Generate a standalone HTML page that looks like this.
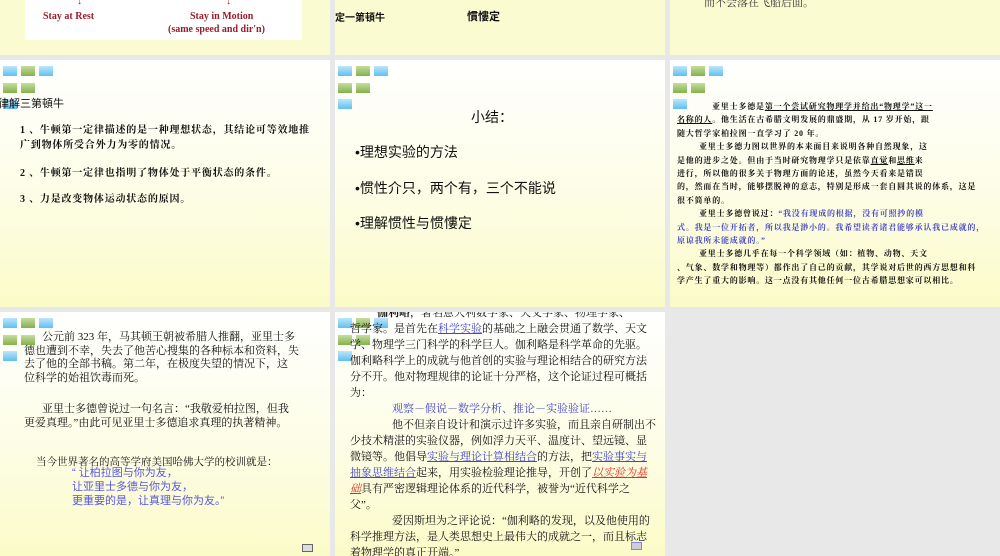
<!DOCTYPE html>
<html><head><meta charset="utf-8"><style>
*{margin:0;padding:0;box-sizing:border-box}
body{width:1000px;height:556px;background:#e8e8e8;position:relative;overflow:hidden;font-family:"Liberation Serif","Noto Serif CJK SC",serif;color:#111}
.s{position:absolute;background:linear-gradient(#ffffff 0%,#fdfde6 55%,#fbfbc8 100%);overflow:hidden}
.t{position:absolute;white-space:nowrap}
.sq{position:absolute;width:14px;height:10px}
.b{background:linear-gradient(#bfe6fb,#5ec0f0)}
.g{background:linear-gradient(#c6dca0,#84b24c)}
.sans{font-family:"Liberation Sans","Noto Sans CJK SC",sans-serif}
.u{text-decoration:underline}
.bl{color:#4646c8}
</style></head><body>

<!-- row 1 -->
<div class="s" style="left:0;top:0;width:330px;height:55px;background:#fbfbd2">
  <div style="position:absolute;left:25px;top:0;width:277px;height:40px;background:#fff"></div>
  <div class="t" style="left:77px;top:-4px;color:#a02020;font-size:10px">↓</div>
  <div class="t" style="left:226px;top:-4px;color:#a02020;font-size:10px">↓</div>
  <div class="t" style="left:43px;top:11px;color:#9a1e2a;font-size:10px;font-weight:bold">Stay at Rest</div>
  <div class="t" style="left:190px;top:11px;color:#9a1e2a;font-size:10px;font-weight:bold">Stay in Motion</div>
  <div class="t" style="left:168px;top:24px;color:#9a1e2a;font-size:10px;font-weight:bold">(same speed and dir'n)</div>
</div>
<div class="s" style="left:335px;top:0;width:330px;height:55px;background:#fbfbd2">
  <div class="t sans" style="left:0;top:9px;font-size:10px;font-weight:bold">定一第頓牛</div>
  <div class="t sans" style="left:132px;top:8px;font-size:11px;font-weight:bold">慣慺定</div>
</div>
<div class="s" style="left:670px;top:0;width:330px;height:55px;background:#fbfbd2">
  <div class="t" style="left:34px;top:-6px;font-size:11px;color:#333">而不会落在飞船后面。</div>
</div>

<!-- row 2 -->
<div class="s" style="left:0;top:60px;width:330px;height:247px">
  <div class="sq b" style="left:3px;top:6px"></div><div class="sq g" style="left:21px;top:6px"></div><div class="sq b" style="left:39px;top:6px"></div>
  <div class="sq g" style="left:3px;top:23px"></div><div class="sq g" style="left:21px;top:23px"></div>
  <div class="sq b" style="left:3px;top:39px"></div>
  <div class="t sans" style="left:-2px;top:35px;font-size:11px">律解三第頓牛</div>
  <div class="t" style="left:20px;top:63px;font-size:10px;letter-spacing:0.8px;line-height:15px;font-weight:bold">1 、牛顿第一定律描述的是一种理想状态，其结论可等效地推<br>广到物体所受合外力为零的情况。</div>
  <div class="t" style="left:20px;top:104px;font-size:10px;letter-spacing:0.8px;font-weight:bold">2 、牛顿第一定律也指明了物体处于平衡状态的条件。</div>
  <div class="t" style="left:20px;top:130px;font-size:10px;letter-spacing:0.8px;font-weight:bold">3 、力是改变物体运动状态的原因。</div>
</div>
<div class="s" style="left:335px;top:60px;width:330px;height:247px">
  <div class="sq b" style="left:3px;top:6px"></div><div class="sq g" style="left:21px;top:6px"></div><div class="sq b" style="left:39px;top:6px"></div>
  <div class="sq g" style="left:3px;top:23px"></div><div class="sq g" style="left:21px;top:23px"></div>
  <div class="sq b" style="left:3px;top:39px"></div>
  <div class="t sans" style="left:136px;top:47px;font-size:14px">小结：</div>
  <div class="t sans" style="left:20px;top:82px;font-size:14px">•理想实验的方法</div>
  <div class="t sans" style="left:20px;top:118px;font-size:14px">•惯性介只，两个有，三个不能说</div>
  <div class="t sans" style="left:20px;top:153px;font-size:14px">•理解惯性与惯慺定</div>
</div>
<div class="s" style="left:670px;top:60px;width:330px;height:247px">
  <div class="sq b" style="left:3px;top:6px"></div><div class="sq g" style="left:21px;top:6px"></div><div class="sq b" style="left:39px;top:6px"></div>
  <div class="sq g" style="left:3px;top:23px"></div><div class="sq g" style="left:21px;top:23px"></div>
  <div class="sq b" style="left:3px;top:39px"></div>
  <div class="t" style="left:7px;top:40px;font-size:8px;letter-spacing:0.8px;line-height:13.4px;font-weight:bold">
    <span style="padding-left:35px"></span>亚里士多德是<span class="u">第一个尝试研究物理学并给出“物理学”这一</span><br>
    <span class="u">名称的人</span>。他生活在古希腊文明发展的鼎盛期，从 17 岁开始，跟<br>
    随大哲学家柏拉图一直学习了 20 年。<br>
    <span style="padding-left:22px"></span>亚里士多德力图以世界的本来面目来说明各种自然现象，这<br>
    是他的进步之处。但由于当时研究物理学只是依靠<span class="u">直觉</span>和<span class="u">思维</span>来<br>
    进行，所以他的很多关于物理方面的论述，虽然今天看来是错误<br>
    的，然而在当时，能够摆脱神的意志，特别是形成一套自圆其说的体系，这是<br>
    很不简单的。<br>
    <span style="padding-left:22px"></span>亚里士多德曾说过：<span class="bl">“我没有现成的根据，没有可照抄的模</span><br>
    <span class="bl">式。我是一位开拓者，所以我是渺小的。我希望读者诸君能够承认我已成就的，</span><br>
    <span class="bl">原谅我所未能成就的。”</span><br>
    <span style="padding-left:22px"></span>亚里士多德几乎在每一个科学领域（如：植物、动物、天文<br>
    、气象、数学和物理等）都作出了自己的贡献，其学说对后世的西方思想和科<br>
    学产生了重大的影响。这一点没有其他任何一位古希腊思想家可以相比。
  </div>
</div>

<!-- row 3 -->
<div class="s" style="left:0;top:312px;width:330px;height:244px">
  <div class="sq b" style="left:3px;top:6px"></div><div class="sq g" style="left:21px;top:6px"></div><div class="sq b" style="left:39px;top:6px"></div>
  <div class="sq g" style="left:3px;top:23px"></div><div class="sq g" style="left:21px;top:23px"></div>
  <div class="sq b" style="left:3px;top:39px"></div>
  <div class="t" style="left:24px;top:19px;font-size:11px;line-height:13.6px">
    <span style="padding-left:18px"></span>公元前 323 年，马其顿王朝被希腊人推翻，亚里士多<br>
    德也遭到不幸，失去了他苦心搜集的各种标本和资料，失<br>
    去了他的全部书稿。第二年，在极度失望的情况下，这<br>
    位科学的始祖饮毒而死。</div>
  <div class="t" style="left:24px;top:90px;font-size:11px;line-height:14px">
    <span style="padding-left:18px"></span>亚里士多德曾说过一句名言：“我敬爱柏拉图，但我<br>更爱真理。”由此可见亚里士多德追求真理的执著精神。</div>
  <div class="t" style="left:36px;top:142px;font-size:10.5px">当今世界著名的高等学府美国哈佛大学的校训就是：</div>
  <div class="t sans" style="left:72px;top:154px;font-size:11px;line-height:14px;color:#5656e0">“ 让柏拉图与你为友，<br>让亚里士多德与你为友，<br>更重要的是，让真理与你为友。”</div>
  <div style="position:absolute;left:302px;top:232px;width:11px;height:8px;border:1px solid #666;background:#ddd"></div>
</div>
<div class="s" style="left:335px;top:312px;width:330px;height:244px">
  <div class="sq b" style="left:3px;top:6px"></div><div class="sq g" style="left:21px;top:6px"></div><div class="sq b" style="left:39px;top:6px"></div>
  <div class="sq g" style="left:3px;top:23px"></div><div class="sq g" style="left:21px;top:23px"></div>
  <div class="sq b" style="left:3px;top:39px"></div>
  <div class="t" style="left:15px;top:-7px;font-size:11px;line-height:16px">
    <span style="padding-left:27px"></span><b>伽利略</b>，著名意大利数学家、天文学家、物理学家、<br>
    哲学家。是首先在<span class="u bl">科学实验</span>的基础之上融会贯通了数学、天文<br>
    学、物理学三门科学的科学巨人。伽利略是科学革命的先驱。<br>
    伽利略科学上的成就与他首创的实验与理论相结合的研究方法<br>
    分不开。他对物理规律的论证十分严格，这个论证过程可概括<br>
    为：<br>
    <span style="padding-left:42px"></span><span class="bl">观察－假说－数学分析、推论－实验验证……</span><br>
    <span style="padding-left:42px"></span>他不但亲自设计和演示过许多实验，而且亲自研制出不<br>
    少技术精湛的实验仪器，例如浮力天平、温度计、望远镜、显<br>
    微镜等。他倡导<span class="u bl">实验与理论计算相结合</span>的方法，把<span class="u bl">实验事实与</span><br>
    <span class="u bl">抽象思维结合</span>起来，用实验检验理论推导，开创了<i class="u" style="color:#e03020">以实验为基</i><br>
    <i class="u" style="color:#e03020">础</i>具有严密逻辑理论体系的近代科学，被誉为“近代科学之<br>
    父”。<br>
    <span style="padding-left:42px"></span>爱因斯坦为之评论说：“伽利略的发现，以及他使用的<br>
    科学推理方法，是人类思想史上最伟大的成就之一，而且标志<br>
    着物理学的真正开端。”</div>
  <div style="position:absolute;left:296px;top:230px;width:11px;height:8px;border:1px solid #88c;background:#ccd"></div>
</div>
</body></html>
